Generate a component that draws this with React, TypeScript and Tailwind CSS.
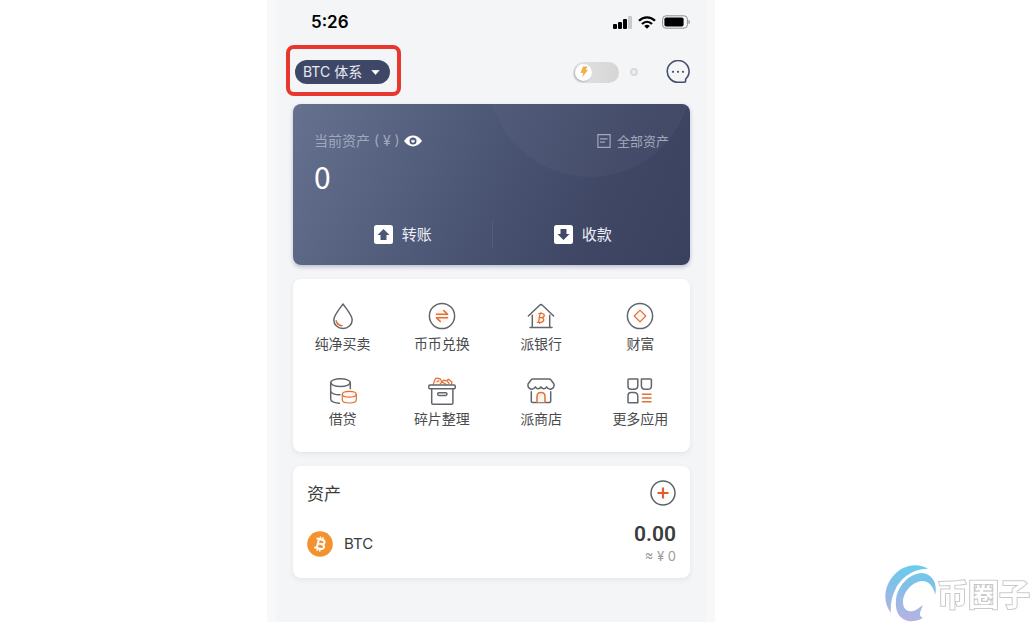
import type { ReactNode } from "react";

const INK = "#62666c";
const ORANGE = "#e0703a";
const CREAM = "#fff4ea";

function Glyph({ children }: { children: ReactNode }) {
  return (
    <svg
      viewBox="0 0 28 28"
      className="size-7"
      fill="none"
      stroke={INK}
      strokeWidth="1.5"
      strokeLinecap="round"
      strokeLinejoin="round"
      aria-hidden="true"
    >
      {children}
    </svg>
  );
}

const apps: { label: string; icon: ReactNode }[] = [
  {
    label: "纯净买卖",
    icon: (
      <Glyph>
        <path d="M14 2 C16 5 23.2 13 23.2 18 A9.2 8.4 0 0 1 4.8 18 C4.8 13 12 5 14 2 Z" />
        <path d="M7.2 18.8 C7.8 21.8 10 23.6 13 23.8" stroke={ORANGE} />
        <path d="M7.4 19.5 C9 21.4 10.5 22.6 12.6 23.6" stroke={ORANGE} strokeWidth="0.8" />
      </Glyph>
    ),
  },
  {
    label: "币币兑换",
    icon: (
      <Glyph>
        <circle cx="14" cy="14" r="12.6" />
        <circle cx="14" cy="14" r="7" fill={CREAM} stroke="none" />
        <path d="M8.5 12.3 H19.6 L15.8 8.6 M19.5 15.8 H8.4 L12.2 19.4" stroke={ORANGE} />
      </Glyph>
    ),
  },
  {
    label: "派银行",
    icon: (
      <Glyph>
        <path d="M1.4 14 L12.6 3.3 Q14 2 15.4 3.3 L26.6 14 M5.3 13.2 V25.6 M22.7 13.2 V25.6 M3 25.6 H25" />
        <circle cx="14" cy="16" r="6" fill={CREAM} stroke="none" />
        <path
          d="M11.8 11.5 H14.8 C18.4 11.7 17.8 15.5 14.5 15.7 H12 M14.5 15.7 C18 16 17.2 20.2 13.5 20.3 H10.3 M13 11.6 L11.6 20.2 M14 10.3 V11.4 M12.8 20.4 L12.6 21.5"
          stroke={ORANGE}
          strokeWidth="1.2"
        />
      </Glyph>
    ),
  },
  {
    label: "财富",
    icon: (
      <Glyph>
        <circle cx="14" cy="14" r="12.6" />
        <path d="M14 8.2 L19.8 14 L14 19.8 L8.2 14 Z" stroke={ORANGE} fill={CREAM} strokeWidth="1.2" />
      </Glyph>
    ),
  },
  {
    label: "借贷",
    icon: (
      <Glyph>
        <ellipse cx="11.5" cy="5.6" rx="9.8" ry="3.9" />
        <path d="M1.7 5.6 V22.3 C1.7 24.6 6 26.2 10.4 26.2 M21.3 5.6 V11.5 M1.7 14 C2 16.4 6.2 18 11 17.8" />
        <ellipse cx="20.3" cy="17.3" rx="7" ry="2.9" stroke={ORANGE} fill={CREAM} strokeWidth="1.2" />
        <path d="M13.3 17.3 V23 C13.3 27 27.3 27 27.3 23 V17.3" stroke={ORANGE} strokeWidth="1.2" />
      </Glyph>
    ),
  },
  {
    label: "碎片整理",
    icon: (
      <Glyph>
        <path
          d="M5.2 7.6 L7 2.5 Q7.6 .8 9.4 1.2 L12.2 1.8 L14 5 L15.6 3.2 L18.5 3.8 L20.5 2.2 L24 5 L23.4 7.6 M9 4.8 L11 3.8 M12.4 6.6 L14 5 L18 7.2 M19.5 4.4 L21 6.4"
          stroke={ORANGE}
          fill={CREAM}
          strokeWidth="1.2"
        />
        <rect x=".8" y="8" width="26.4" height="3.7" rx="1" />
        <path d="M3.7 11.8 V26 Q3.7 27.2 5 27.2 H23.6 Q24.9 27.2 24.9 26 V11.8" />
        <rect x="9.6" y="15.8" width="9.4" height="2.6" rx="1.3" />
      </Glyph>
    ),
  },
  {
    label: "派商店",
    icon: (
      <Glyph>
        <path d="M6 2 H22 Q23.3 2 24 3 L26.8 6.8 C28.2 11.2 22.6 14.6 19.6 9.8 C18.2 12.6 15.2 12.2 14 9.8 C12.8 12.2 9.8 12.6 8.4 9.8 C5.4 14.6 -.2 11.2 1.2 6.8 L4 3 Q4.7 2 6 2 Z" />
        <path d="M4.3 14.8 V24.2 Q4.3 25.4 5.5 25.4 H22.5 Q23.7 25.4 23.7 24.2 V14.8" />
        <path d="M10 25.2 V19.5 C10 14.2 18 14.2 18 19.5 V25.2" stroke={ORANGE} fill={CREAM} />
      </Glyph>
    ),
  },
  {
    label: "更多应用",
    icon: (
      <Glyph>
        <path d="M2.8 2 H11.8 V8.5 Q11.8 12.3 8 12.3 H5 Q2 12.3 2 9 V2.8 Q2 2 2.8 2 Z" />
        <path d="M15.4 2 H24.6 Q25.4 2 25.4 2.8 V9 Q25.4 12.3 22 12.3 H19 Q15.4 12.3 15.4 8.5 Z" />
        <path d="M5 15.4 H8 Q11.8 15.4 11.8 19.2 V25.8 H2.8 Q2 25.8 2 25 V18.8 Q2 15.4 5 15.4 Z" />
        <path d="M16.4 17.2 H25 M16.4 21 H25 M16.4 24.8 H25" stroke={ORANGE} />
      </Glyph>
    ),
  },
];

function StatusBar() {
  return (
    <div className="flex h-11 items-center justify-between pl-[18px]">
      <time className="font-['Inter',sans-serif] text-[17px] leading-6 font-semibold text-black">5:26</time>
      <div className="flex items-center gap-[6px]">
        <svg viewBox="0 0 19 13" className="h-[13px] w-[19px]" aria-hidden="true">
          <rect x="0" y="8" width="4" height="5" rx="1" />
          <rect x="5" y="6" width="4" height="7" rx="1" />
          <rect x="10" y="3" width="4" height="10" rx="1" />
          <rect x="15" y="0" width="4" height="13" rx="1" fill="#c9cacc" />
        </svg>
        <svg viewBox="0 0 18 13" className="h-[13px] w-[18px]" fill="none" stroke="#000" strokeWidth="2.3" aria-hidden="true">
          <path d="M1 4.8 C5.5 .2 12.5 .2 17 4.8 M4 8 C7 5.1 11 5.1 14 8" />
          <path d="M9 12.8 L6.2 10 Q9 7.6 11.8 10 Z" fill="#000" stroke="none" />
        </svg>
        <svg viewBox="0 0 28 14" className="h-[14px] w-7" aria-hidden="true">
          <rect x=".6" y=".8" width="24.8" height="12.4" rx="3.4" fill="none" stroke="#8f9194" />
          <rect x="2.4" y="2.5" width="19.2" height="9" rx="1.8" />
          <path d="M26.5 4.8 V9.2 Q28 8.4 28 7 Q28 5.6 26.5 4.8 Z" fill="#8f9194" />
        </svg>
      </div>
    </div>
  );
}

function TopBar() {
  return (
    <header className="flex h-14 items-center justify-between pl-[2px]">
      <div className="relative">
        <select
          aria-label="体系"
          className="block h-6 w-[95px] appearance-none rounded-full bg-[#3f4767] pl-2 font-['Inter','Noto_Sans_CJK_SC',sans-serif] text-[14px] leading-6 text-[#e6e9f2] outline-none"
        >
          <option>BTC 体系</option>
        </select>
        <svg viewBox="0 0 9 5" className="pointer-events-none absolute top-[10px] right-[10px] h-[5px] w-[9px]" aria-hidden="true">
          <path d="M.8 .3 H8.2 L4.5 4.6 Z" fill="#fff" stroke="#fff" strokeWidth=".6" strokeLinejoin="round" />
        </svg>
        <span className="pointer-events-none absolute -top-[15px] -right-[11px] -bottom-3 -left-[9px] rounded-lg border-4 border-[#e8372f]" />
      </div>
      <div className="flex items-center">
        <label className="relative block">
          <input
            type="checkbox"
            role="switch"
            aria-label="闪电"
            className="block h-[21px] w-[46px] appearance-none rounded-full bg-linear-to-r from-[#e3e3e3] to-[#d5d5d6]"
          />
          <span className="absolute top-[2px] left-[2px] flex size-[17px] items-center justify-center rounded-full bg-white shadow-[-1px_1px_2px_#aab7c0]">
            <svg viewBox="0 0 10 12" className="h-3 w-[10px]" aria-hidden="true">
              <path d="M4 .5 H8.6 L6.8 4 H9 L3 11.5 L4.2 7 H1.5 Z" fill="#eeb248" />
            </svg>
          </span>
        </label>
        <span className="ml-[11px] size-2 rounded-full border-2 border-[#d9dadc] bg-[#eceded]" />
        <button type="button" aria-label="消息" className="ml-7">
          <svg viewBox="0 0 24 24" className="size-6" fill="none" stroke="#484f6d" strokeWidth="1.6" aria-hidden="true">
            <path d="M18.3 22.3 H12 A10.9 10.9 0 1 1 22.6 14.5 C22 16.8 20.2 18.2 19.7 19 C19.3 20 20.3 22.3 18.3 22.3 Z" />
            <g fill="#484f6d" stroke="none">
              <circle cx="7" cy="11.8" r="1.1" />
              <circle cx="12" cy="11.8" r="1.1" />
              <circle cx="17" cy="11.8" r="1.1" />
            </g>
          </svg>
        </button>
      </div>
    </header>
  );
}

function BoxArrow({ down = false }: { down?: boolean }) {
  return (
    <svg viewBox="0 0 19 19" className="size-[19px]" aria-hidden="true">
      <rect width="19" height="19" rx="2.5" fill="#fff" />
      {down ? (
        <path d="M6.5 4 H12.5 V9 H15.5 L9.5 15 L3.5 9 H6.5 Z" fill="#414968" />
      ) : (
        <path d="M9.5 4 L15.5 10 H12.5 V15 H6.5 V10 H3.5 Z" fill="#4c5676" />
      )}
    </svg>
  );
}

function BalanceCard() {
  return (
    <section className="relative mt-1 overflow-hidden rounded-lg bg-[linear-gradient(115deg,#66708f_0%,#4c5675_45%,#3f4765_75%,#3a415f_100%)] px-[21px] pt-[27px] pb-[15px] text-white shadow-[0_2px_4px_#b9bfd0]">
      <span className="absolute -top-[131px] -right-[2px] size-[204px] rounded-full bg-white/3" />
      <div className="relative flex h-5 items-center justify-between text-[#a0a8bd]">
        <div className="flex items-center gap-1">
          <span className="font-['Inter','Noto_Sans_CJK_SC',sans-serif] text-[14px] leading-5">当前资产 ( ¥ )</span>
          <button type="button" aria-label="显示资产">
            <svg viewBox="0 0 18 12" className="h-3 w-[18px]" aria-hidden="true">
              <path d="M0 6 C5 -1.2 13 -1.2 18 6 C13 13.2 5 13.2 0 6 Z" fill="#fff" />
              <circle cx="9" cy="6" r="3.5" fill="#4e5878" />
              <circle cx="9" cy="6" r="1.8" fill="#fff" />
              <path d="M9 6 L7.6 3.2 L10 4.2 Z" fill="#4e5878" />
            </svg>
          </button>
        </div>
        <a href="#assets" className="flex items-center gap-[6px] text-[13px] leading-5">
          <svg viewBox="0 0 14 14" className="size-[14px]" fill="none" stroke="#a0a8bd" strokeWidth="1.2" aria-hidden="true">
            <path d="M.9 .7 H13.1 V13.3 H.9 Z M3 4.8 H10.6 M3 8.2 H8" />
          </svg>
          全部资产
        </a>
      </div>
      <p className="relative mt-[5px] text-[30px] leading-10">0</p>
      <div className="relative mt-[22px] grid h-8 grid-cols-2 items-center text-[15px] text-[#eceff6]">
        <button type="button" className="flex items-center justify-center gap-[9px]">
          <BoxArrow />
          转账
        </button>
        <button type="button" className="flex h-7 items-center justify-center gap-[9px] border-l border-[#535c79] pl-1">
          <BoxArrow down />
          收款
        </button>
      </div>
    </section>
  );
}

function AppGrid() {
  return (
    <nav className="mt-[14px] grid grid-cols-4 gap-y-6 rounded-lg bg-white pt-[23px] pb-6 shadow-[0_2px_5px_#e3e5e8]">
      {apps.map((app) => (
        <a key={app.label} href="#apps" className="flex flex-col items-center gap-[3px]">
          {app.icon}
          <span className="text-[14px] leading-5 text-[#4a4b4d]">{app.label}</span>
        </a>
      ))}
    </nav>
  );
}

function Assets() {
  return (
    <section id="assets" className="mt-[14px] rounded-lg bg-white px-[14px] pt-[14px] pb-3 text-[#3a3b3d] shadow-[0_2px_5px_#e3e5e8]">
      <div className="flex items-center justify-between">
        <h2 className="text-[17px] leading-6">资产</h2>
        <button type="button" aria-label="添加资产">
          <svg viewBox="0 0 26 26" className="size-[26px]" fill="none" aria-hidden="true">
            <circle cx="13" cy="13" r="12" stroke="#5e6268" strokeWidth="1.5" />
            <path d="M13 7.5 V18.5 M7.5 13 H18.5" stroke="#e65a2b" strokeWidth="2.2" />
          </svg>
        </button>
      </div>
      <div className="mt-4 flex items-center">
        <svg viewBox="0 0 26 26" className="size-[26px]" aria-hidden="true">
          <circle cx="13" cy="13" r="12.8" fill="#f3922e" />
          <g transform="rotate(14 13 13)" fill="none" stroke="#fff" strokeWidth="2">
            <path d="M8.2 8.4 H14 C18 8.4 18 12.8 14 12.8 H10.6 M14 12.8 C18.9 12.8 18.9 17.6 14 17.6 H8.2 M10.8 8.4 V17.6" />
            <path d="M11.8 5.6 V8.4 M14.4 5.6 V8.4 M11.8 17.6 V20.4 M14.4 17.6 V20.4" strokeWidth="1.5" />
          </g>
        </svg>
        <span className="ml-[11px] font-['Inter',sans-serif] text-[15px] leading-6">BTC</span>
        <div className="ml-auto text-right">
          <p className="font-['Roboto',sans-serif] text-[21px] leading-6 font-semibold">0.00</p>
          <p className="font-['Inter','Noto_Sans_CJK_SC',sans-serif] text-[13px] leading-5 text-[#9a9b9e]">≈ ¥ 0</p>
        </div>
      </div>
    </section>
  );
}

function Watermark() {
  return (
    <div className="fixed right-[5px] bottom-0 flex items-center">
      <svg viewBox="0 0 52 58" className="h-[58px] w-[52px]" aria-hidden="true">
        <defs>
          <linearGradient id="swirl" gradientUnits="userSpaceOnUse" x1="30" y1="0" x2="22" y2="58">
            <stop offset="0" stopColor="#66cdf0" />
            <stop offset=".35" stopColor="#7fc0e8" />
            <stop offset="1" stopColor="#b9b2e2" />
          </linearGradient>
        </defs>
        <g fill="url(#swirl)">
          <path d="M6 49 C-3 38 -1 21 10 10 C20 0 34 -1 43 5 C31 4 19 11 12 22 C7 31 5 40 6 49 Z" />
          <path d="M11 36 C12 23 24 9 37 9 C47 10 53 19 50 31 C49 23 44 17 37 17 C27 18 18 28 18 38 C18 47 25 49 31 46 L38 41 C35 48 33 52 38 54 C31 58 24 58 20 56 C13 53 10 46 11 36 Z" />
        </g>
      </svg>
      <span className="text-[31px] leading-10 font-bold text-white [paint-order:stroke] [-webkit-text-stroke:2px_#c9c9c9]">
        币圈子
      </span>
    </div>
  );
}

export default function App() {
  return (
    <div className="flex min-h-screen justify-center bg-white pr-[53px] font-['Noto_Sans_CJK_SC',sans-serif]">
      <main className="w-full max-w-md border-x-[9px] border-[#f8f8f9] bg-[#f4f5f7] pr-4 pl-[17px]">
        <StatusBar />
        <TopBar />
        <BalanceCard />
        <AppGrid />
        <Assets />
      </main>
      <Watermark />
    </div>
  );
}
